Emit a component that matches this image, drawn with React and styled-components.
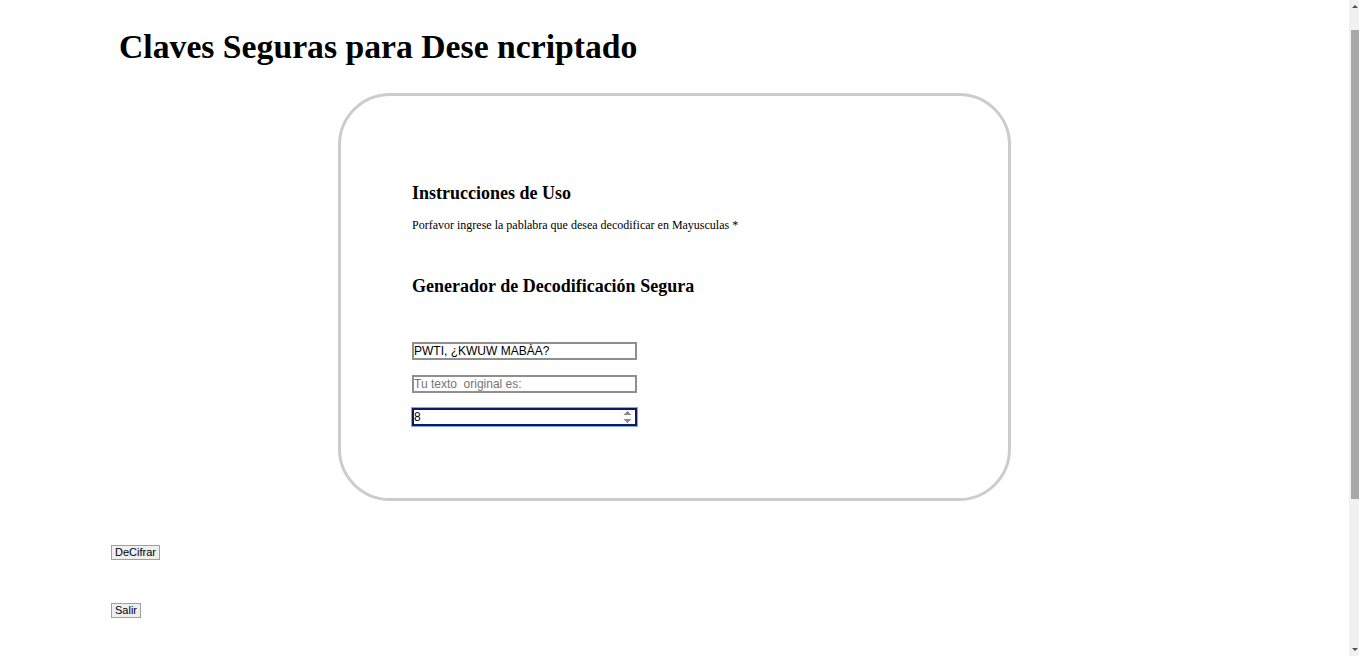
import React from "react";
import styled, { createGlobalStyle } from "styled-components";

const GlobalStyle = createGlobalStyle`
  body {
    margin: 8px;
    font-family: "Liberation Serif", "Times New Roman", serif;
    background: #fff;
    color: #000;
  }
`;

const Page = styled.div`
  padding-bottom: 244px;
`;

const Title = styled.h1`
  font-size: 33.7px;
  font-weight: bold;
  margin: 20px 0 27px 111px;
`;

const Card = styled.section`
  box-sizing: border-box;
  width: 673px;
  height: 408px;
  margin-left: 330px;
  padding: 87px 71px 0;
  border: 3px solid #cccccc;
  border-radius: 52px;
`;

const H3 = styled.h3`
  font-size: 18px;
  font-weight: bold;
  margin: ${props => props.top || 0}px 0 0;
`;

const Text = styled.p`
  font-size: 12px;
  margin: 14px 0 0;
`;

const Fields = styled.div`
  display: flex;
  flex-direction: column;
  gap: 15px;
  margin-top: 45px;
`;

const Input = styled.input`
  box-sizing: border-box;
  width: 225px;
  height: 18px;
  padding: 0;
  font-family: "Liberation Sans", Arial, sans-serif;
  font-size: 12px;
  color: #000;
  background: #fff;
  border: 2px solid ${props => (props.focused ? "#0b1a63" : "#8f8f8f")};
  box-shadow: ${props => (props.focused ? "0 0 0 1px #7fa6e6" : "none")};
  outline: none;
  &::placeholder {
    color: #757575;
  }
`;

const Buttons = styled.div`
  display: flex;
  flex-direction: column;
  align-items: flex-start;
  gap: 43px;
  margin: 44px 0 0 103px;
`;

const Button = styled.button`
  box-sizing: border-box;
  height: 15px;
  padding: 0 3px;
  font-family: "Liberation Sans", Arial, sans-serif;
  font-size: 11px;
  line-height: 13px;
  color: #000;
  background: #efefef;
  border: 1px solid #a0a0a0;
  border-radius: 0;
  cursor: pointer;
`;

/* stand-in for the browser scrollbar seen in the capture */
const Scrollbar = styled.div`
  position: fixed;
  top: 0;
  right: 0;
  width: 10px;
  height: 100vh;
  background: #f1f1f1;
`;

const Thumb = styled.div`
  position: absolute;
  top: 30px;
  right: 0;
  width: 8px;
  height: 469px;
  background: #a8a8a8;
`;

const Arrow = styled.div`
  position: absolute;
  right: 1px;
  ${props => (props.down ? "bottom: 5px;" : "top: 5px;")}
  width: 0;
  height: 0;
  border-left: 3px solid transparent;
  border-right: 3px solid transparent;
  ${props => (props.down ? "border-top: 3px solid #505050;" : "border-bottom: 3px solid #505050;")}
`;

export default function App() {
  return (
    <Page>
      <GlobalStyle />
      <Title>Claves Seguras para Dese ncriptado</Title>
      <Card>
        <H3>Instrucciones de Uso</H3>
        <Text>Porfavor ingrese la pablabra que desea decodificar en Mayusculas *</Text>
        <H3 top={43}>Generador de Decodificación Segura</H3>
        <Fields>
          <Input type="text" defaultValue="PWTI, ¿KWUW MABÀA?" />
          <Input type="text" placeholder="Tu texto  original es:" />
          <Input type="number" defaultValue="8" focused autoFocus />
        </Fields>
      </Card>
      <Buttons>
        <Button>DeCifrar</Button>
        <Button>Salir</Button>
      </Buttons>
      <Scrollbar>
        <Arrow />
        <Thumb />
        <Arrow down />
      </Scrollbar>
    </Page>
  );
}
